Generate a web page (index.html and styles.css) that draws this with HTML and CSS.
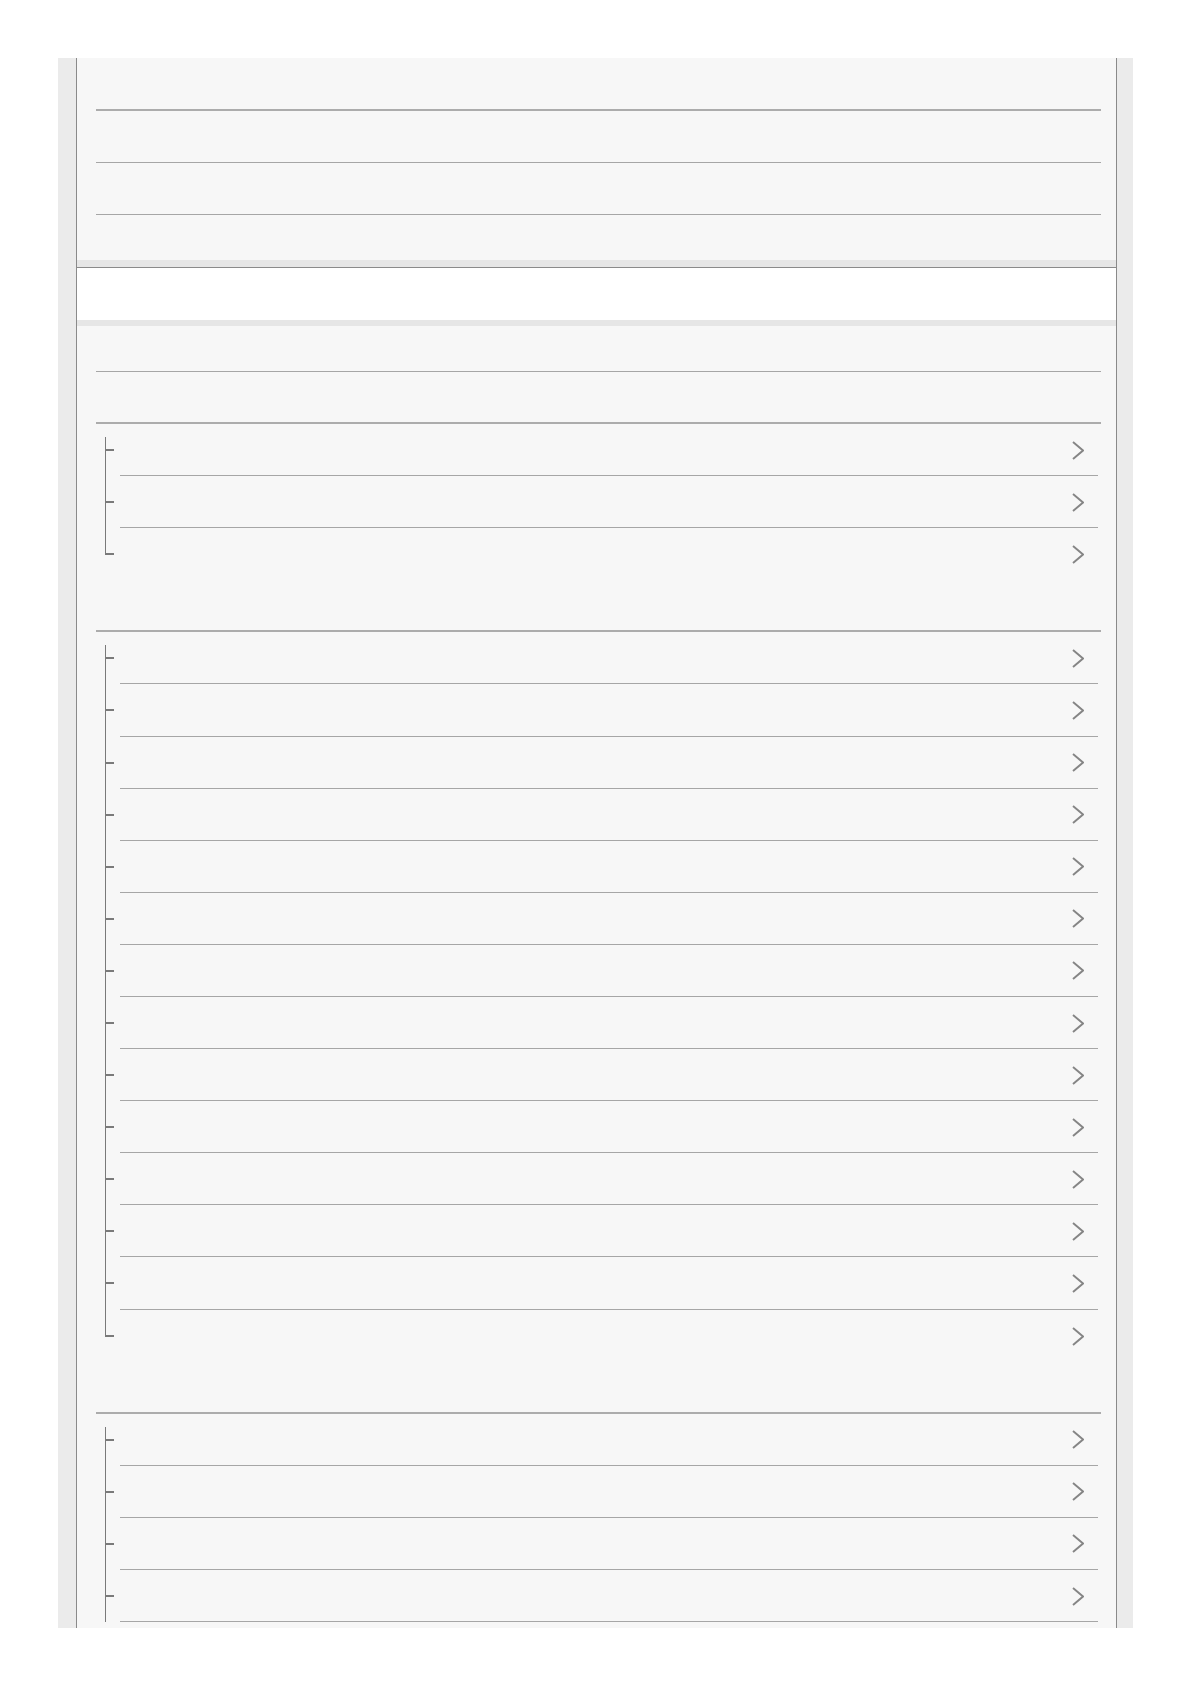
FILE: index.html
```html
<!DOCTYPE html>
<html lang="en">
<head>
    <meta charset="UTF-8">
    <meta name="viewport" content="width=device-width, initial-scale=1.0">
    <title>Contents</title>
    <link rel="stylesheet" href="styles.css">
</head>
<body>
    <div class="page">
        <div class="panel">
            <ul class="toc-top">
                <li class="toc-row first"></li>
                <li class="toc-row"></li>
                <li class="toc-row"></li>
            </ul>
            <div class="toc-bar"></div>
            <div class="toc-row"></div>

            <div class="section-head"></div>
            <ul class="tree">
                <li class="tree-item"><svg class="chev" viewBox="0 0 12 19"><polyline points="1,1 11,9.5 1,18"/></svg></li>
                <li class="tree-item"><svg class="chev" viewBox="0 0 12 19"><polyline points="1,1 11,9.5 1,18"/></svg></li>
                <li class="tree-item"><svg class="chev" viewBox="0 0 12 19"><polyline points="1,1 11,9.5 1,18"/></svg></li>
            </ul>

            <div class="section-head"></div>
            <ul class="tree">
                <li class="tree-item"><svg class="chev" viewBox="0 0 12 19"><polyline points="1,1 11,9.5 1,18"/></svg></li>
                <li class="tree-item"><svg class="chev" viewBox="0 0 12 19"><polyline points="1,1 11,9.5 1,18"/></svg></li>
                <li class="tree-item"><svg class="chev" viewBox="0 0 12 19"><polyline points="1,1 11,9.5 1,18"/></svg></li>
                <li class="tree-item"><svg class="chev" viewBox="0 0 12 19"><polyline points="1,1 11,9.5 1,18"/></svg></li>
                <li class="tree-item"><svg class="chev" viewBox="0 0 12 19"><polyline points="1,1 11,9.5 1,18"/></svg></li>
                <li class="tree-item"><svg class="chev" viewBox="0 0 12 19"><polyline points="1,1 11,9.5 1,18"/></svg></li>
                <li class="tree-item"><svg class="chev" viewBox="0 0 12 19"><polyline points="1,1 11,9.5 1,18"/></svg></li>
                <li class="tree-item"><svg class="chev" viewBox="0 0 12 19"><polyline points="1,1 11,9.5 1,18"/></svg></li>
                <li class="tree-item"><svg class="chev" viewBox="0 0 12 19"><polyline points="1,1 11,9.5 1,18"/></svg></li>
                <li class="tree-item"><svg class="chev" viewBox="0 0 12 19"><polyline points="1,1 11,9.5 1,18"/></svg></li>
                <li class="tree-item"><svg class="chev" viewBox="0 0 12 19"><polyline points="1,1 11,9.5 1,18"/></svg></li>
                <li class="tree-item"><svg class="chev" viewBox="0 0 12 19"><polyline points="1,1 11,9.5 1,18"/></svg></li>
                <li class="tree-item"><svg class="chev" viewBox="0 0 12 19"><polyline points="1,1 11,9.5 1,18"/></svg></li>
                <li class="tree-item"><svg class="chev" viewBox="0 0 12 19"><polyline points="1,1 11,9.5 1,18"/></svg></li>
            </ul>

            <div class="section-head"></div>
            <ul class="tree open">
                <li class="tree-item"><svg class="chev" viewBox="0 0 12 19"><polyline points="1,1 11,9.5 1,18"/></svg></li>
                <li class="tree-item"><svg class="chev" viewBox="0 0 12 19"><polyline points="1,1 11,9.5 1,18"/></svg></li>
                <li class="tree-item"><svg class="chev" viewBox="0 0 12 19"><polyline points="1,1 11,9.5 1,18"/></svg></li>
                <li class="tree-item"><svg class="chev" viewBox="0 0 12 19"><polyline points="1,1 11,9.5 1,18"/></svg></li>
            </ul>
        </div>
    </div>
</body>
</html>
```

FILE: styles.css
```css
body {
    font-family: "Liberation Sans", Arial, sans-serif;
    background-color: #fff;
    margin: 0;
}
.page {
    width: 1075px;
    height: 1570px;
    margin: 58px 0 0 58px;
    padding: 0 16px 0 18px;
    box-sizing: border-box;
    background-color: #ebebeb;
    overflow: hidden;
}
.panel {
    height: 100%;
    background-color: #f7f7f7;
    border-left: 1px solid #8a8a8a;
    border-right: 1px solid #8a8a8a;
}
ul {
    list-style: none;
    margin: 0;
    padding: 0;
}
.toc-top {
    padding-top: 0.5px;
    margin-bottom: 52px;
}
.toc-row {
    height: 52.1px;
    margin: 0 15px 0 19px;
    box-sizing: border-box;
    border-bottom: 1px solid #a6a6a6;
}
.toc-row.first {
    border-bottom: 2px solid #acacac;
}
.toc-bar {
    height: 52px;
    background-color: #fff;
    border-top: 1px solid #8a8a8a;
    box-shadow: 0 -7px 0 #e6e6e6, 0 6px 0 #e6e6e6;
}
.section-head {
    height: 52.1px;
    margin: 0 15px 0 19px;
    box-sizing: border-box;
    border-bottom: 2px solid #acacac;
}
.tree {
    position: relative;
}
.tree::before {
    content: "";
    position: absolute;
    left: 28px;
    top: 13px;
    bottom: 26px;
    border-left: 1px solid #7a7a7a;
}
.tree.open::before {
    bottom: 0;
}
.tree-item {
    position: relative;
    height: 52.1px;
    margin: 0 18px 0 43px;
    padding-right: 14px;
    box-sizing: border-box;
    border-bottom: 1px solid #a6a6a6;
    display: flex;
    align-items: center;
    justify-content: flex-end;
}
.tree-item:last-child {
    border-bottom: none;
}
.tree.open .tree-item:last-child {
    border-bottom: 1px solid #a6a6a6;
}
.tree-item::before {
    content: "";
    position: absolute;
    left: -15px;
    top: 25px;
    width: 9px;
    border-top: 2px solid #7a7a7a;
}
.chev {
    width: 12px;
    height: 19px;
    margin-top: 1px;
}
.chev polyline {
    fill: none;
    stroke: #858585;
    stroke-width: 1.9;
}
```
